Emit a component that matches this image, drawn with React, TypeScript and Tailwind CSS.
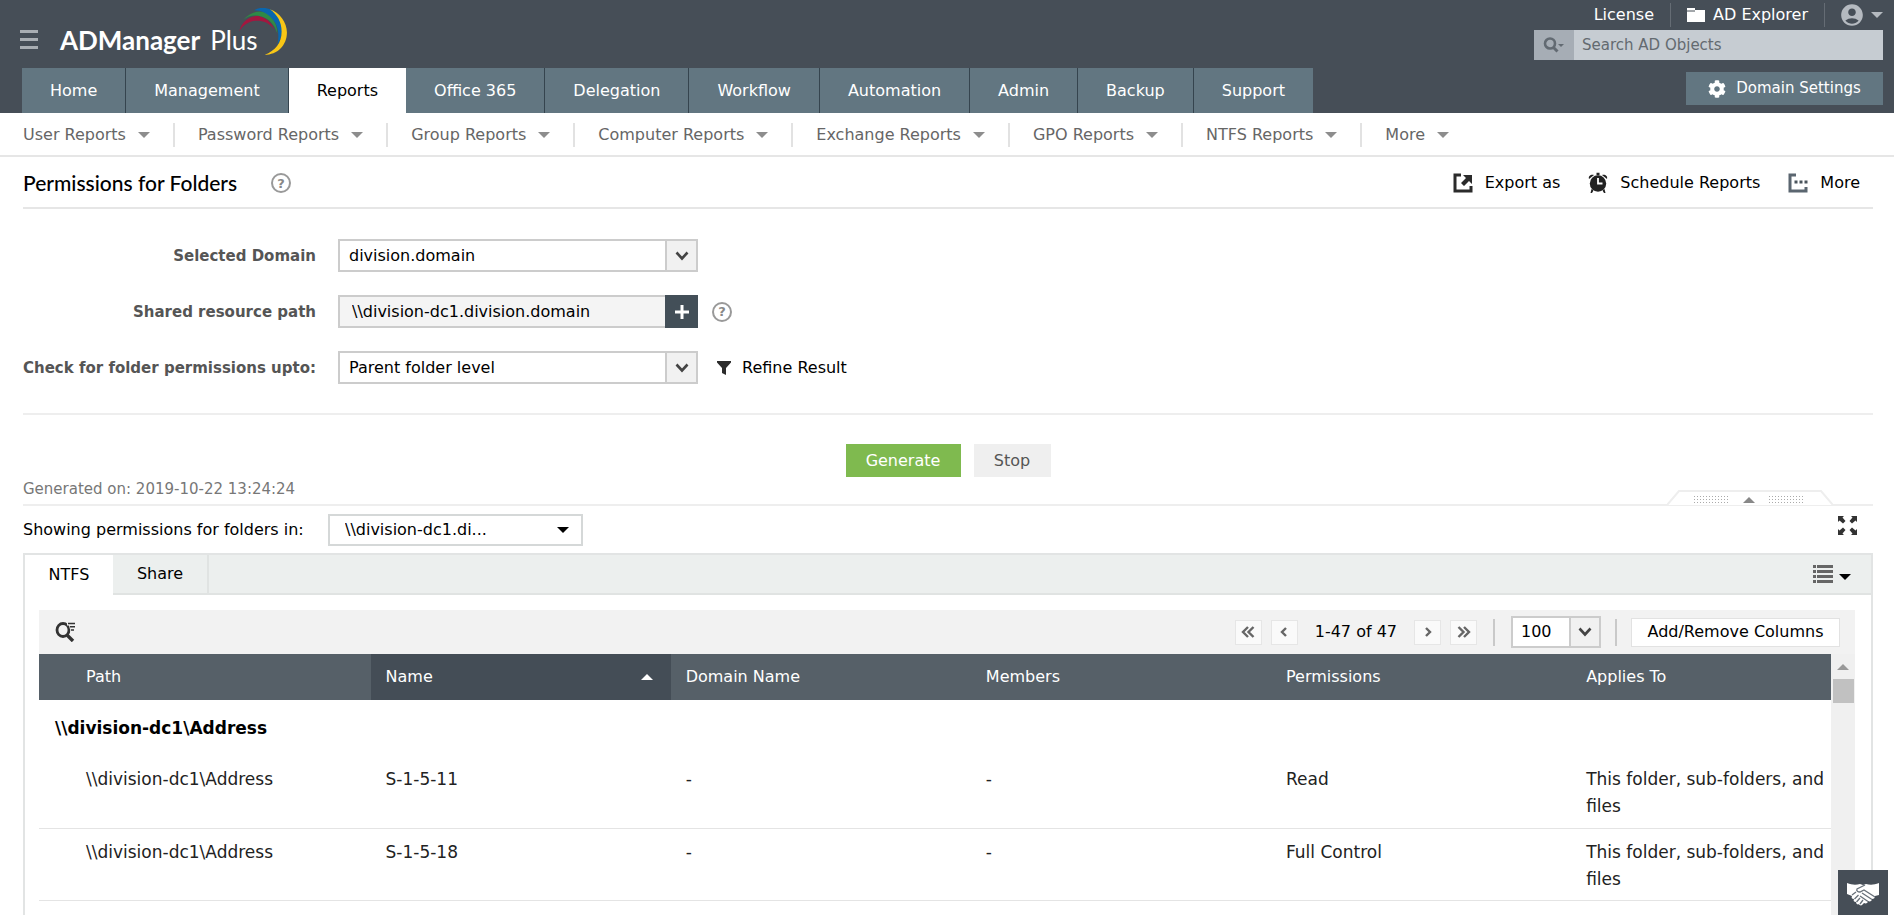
import { FaCog } from 'react-icons/fa';
import { MdAccountCircle } from 'react-icons/md';

const tabs = [
  'Home',
  'Management',
  'Reports',
  'Office 365',
  'Delegation',
  'Workflow',
  'Automation',
  'Admin',
  'Backup',
  'Support',
];

const reportMenus = [
  'User Reports',
  'Password Reports',
  'Group Reports',
  'Computer Reports',
  'Exchange Reports',
  'GPO Reports',
  'NTFS Reports',
  'More',
];

const columns = ['Path', 'Name', 'Domain Name', 'Members', 'Permissions', 'Applies To'];

const rows = [
  {
    path: '\\\\division-dc1\\Address',
    name: 'S-1-5-11',
    domain: '-',
    members: '-',
    permissions: 'Read',
    appliesTo: 'This folder, sub-folders, and files',
  },
  {
    path: '\\\\division-dc1\\Address',
    name: 'S-1-5-18',
    domain: '-',
    members: '-',
    permissions: 'Full Control',
    appliesTo: 'This folder, sub-folders, and files',
  },
];

function Caret({ className = '', up = false }: { className?: string; up?: boolean }) {
  return (
    <svg viewBox="0 0 12 6" className={`h-[6px] w-3 shrink-0 ${className}`} fill="currentColor" aria-hidden="true">
      <path d={up ? 'M0 6 6 0l6 6z' : 'M0 0h12L6 6z'} />
    </svg>
  );
}

function Chevron() {
  return (
    <svg viewBox="0 0 14 10" className="h-[10px] w-[14px]" fill="none" stroke="#444" strokeWidth="2.6" aria-hidden="true">
      <path d="M1.5 1.5 7 7.5l5.5-6" />
    </svg>
  );
}

function Logo() {
  return (
    <a href="#" className="relative flex items-baseline gap-[10px] pr-[30px] font-[Lato,sans-serif] text-[26px] leading-8 text-white">
      <span className="font-bold">ADManager</span>
      <span>Plus</span>
      <svg viewBox="1 1 47 45" className="absolute -top-4 right-0 h-12 w-[50px]" aria-hidden="true">
        <path d="M2 23C5 12 14 7 22 9c7 2 11 7 13 12-5-6-10-8-16-8-8 0-13 4-17 10z" fill="#a3173f" />
        <path d="M6 12C13 4 23 2 30 7c5 4 8 11 8 18-3-9-8-14-15-16-6-2-12-1-17 3z" fill="#2f8a46" />
        <path d="M16 3c9-5 19-1 24 7 4 8 3 17-2 26 2-10 1-19-5-25-4-5-10-8-17-8z" fill="#0a66ae" />
        <path d="M31 2c9 3 16 12 16 22 0 12-9 21-21 21 10-4 16-11 16-22C42 14 38 7 31 2z" fill="#f8c616" />
      </svg>
    </a>
  );
}

function ExportIcon() {
  return (
    <svg viewBox="0 0 20 20" className="size-5" aria-hidden="true">
      <path d="M8 2H2v16h16v-5" fill="none" stroke="#2b2b2b" strokeWidth="3" />
      <path d="M10 2h9v9l-3-3-5 5-3-3 5-5z" fill="#2b2b2b" />
    </svg>
  );
}

function AlarmIcon() {
  return (
    <svg viewBox="0 0 20 22" className="h-[22px] w-5" aria-hidden="true">
      <path d="M1 7c-1-3 2-5 5-4zM19 7c1-3-2-5-5-4zM8.500.8h3v2.500h-3zM3.500 17l2 1.500L4 21H2.500zM16.500 17l-2 1.500L16 21h1.500z" fill="#222" />
      <circle cx="10" cy="11.500" r="8.200" fill="#222" />
      <path d="M10 6v5.500h4.500" fill="none" stroke="#fff" strokeWidth="1.800" />
    </svg>
  );
}

function MoreIcon() {
  return (
    <svg viewBox="0 0 20 20" className="size-5" aria-hidden="true">
      <path d="M8 2H2v16h16v-4" fill="none" stroke="#5b6670" strokeWidth="3" />
      <path d="M6.500 7.500h3v3h-3zM11.500 7.500h3v3h-3zM16.500 7.500h3v3h-3z" fill="#4a545c" />
    </svg>
  );
}

function HandshakeIcon() {
  return (
    <svg viewBox="0 0 32 23" className="h-[23px] w-8" aria-hidden="true">
      <path d="M0 0c5 2 9 2 13 1l3 1 3-1c4 1 8 1 13-1v12l-4 1c0 2-1 3-3 3 0 2-2 3-4 2 0 2-2 3-4 2l-2 2c-1 1-3 0-3-1-1 1-3 0-3-2-2 0-3-1-2-3-2 0-3-1-2-3l-5-2z" fill="#fff" />
      <path
        d="M18 2 10 6c-1 2 1 3 3 3l4-2 11 7M15 10l10 6.500M13 13l8 5.500M5 12l4-3M7.500 16l4-4M9.500 19l3.500-4M13 21l3-4"
        fill="none"
        stroke="#68717a"
        strokeWidth="1.300"
      />
    </svg>
  );
}

function HelpButton() {
  return (
    <button
      type="button"
      aria-label="Help"
      className="flex size-5 items-center justify-center rounded-full border-2 border-[#999] text-[13px] leading-none font-bold text-[#888]"
    >
      ?
    </button>
  );
}

function HeaderBar() {
  return (
    <header className="bg-[#464e57] text-white">
      <div className="flex h-[68px] justify-between pr-[11px] pl-5">
        <div className="flex items-start gap-[22px] pt-6">
          <button type="button" aria-label="Menu" className="mt-[6px] flex w-[18px] flex-col gap-[5px]">
            <span className="h-[3px] w-full bg-[#a9aeb3]" />
            <span className="h-[3px] w-full bg-[#a9aeb3]" />
            <span className="h-[3px] w-full bg-[#a9aeb3]" />
          </button>
          <Logo />
        </div>
        <div className="flex w-[349px] flex-col">
          <div className="flex h-[30px] items-center justify-end">
            <a href="#" className="pr-4">
              License
            </a>
            <a href="#" className="flex h-6 items-center gap-2 border-l border-[#656c74] px-4">
              <svg viewBox="0 0 18 14" className="h-[14px] w-[18px]" fill="#fff" aria-hidden="true">
                <path d="M0 0h8v2h10v12H0z" />
                <path d="M0 3h8" stroke="#464e57" />
              </svg>
              AD Explorer
            </a>
            <button type="button" aria-label="Account" className="flex h-6 items-center gap-[6px] border-l border-[#656c74] pl-[14px] text-[#b5bac0]">
              <MdAccountCircle className="size-[26px]" />
              <Caret />
            </button>
          </div>
          <div className="flex h-[30px]">
            <button type="button" aria-label="Search type" className="flex w-10 items-center justify-center bg-[#a6adb5] text-[#626a72]">
              <svg viewBox="0 0 22 16" className="h-4 w-[22px]" fill="none" stroke="currentColor" aria-hidden="true">
                <circle cx="7" cy="6.500" r="5" strokeWidth="2.600" />
                <path d="m10.500 10.500 4 4" strokeWidth="3" />
                <path d="M15 7h6l-3 3z" fill="currentColor" stroke="none" />
              </svg>
            </button>
            <input
              type="text"
              aria-label="Search AD Objects"
              placeholder="Search AD Objects"
              className="min-w-0 flex-1 bg-[#c6ccd2] px-2 text-[15px] text-[#333] outline-none placeholder:text-[#636a70]"
            />
          </div>
        </div>
      </div>
      <div className="flex h-[45px] justify-between pr-[11px] pl-[22px]">
        <nav className="flex">
          {tabs.map((tab) => (
            <a
              key={tab}
              href="#"
              className={
                tab === 'Reports'
                  ? 'flex items-center bg-white px-7 text-black'
                  : 'flex items-center border-r border-[#35444e] bg-[#627681] px-7 last:border-r-0'
              }
            >
              {tab}
            </a>
          ))}
        </nav>
        <button type="button" className="mt-1 flex h-[33px] w-[197px] items-center justify-center gap-[10px] bg-[#627681] text-[15px]">
          <FaCog className="size-[18px]" />
          Domain Settings
        </button>
      </div>
    </header>
  );
}

function ReportMenu() {
  return (
    <nav className="flex h-11 items-center border-b-2 border-[#e6e6e6] pt-[2px] text-[#666]">
      {reportMenus.map((menu, i) => (
        <div key={menu} className="flex items-center">
          {i > 0 && <span className="h-6 w-[2px] bg-[#e2e2e2]" />}
          <button type="button" className="flex items-center gap-3 px-[23px]">
            {menu}
            <Caret className="text-[#8d8d8d]" />
          </button>
        </div>
      ))}
    </nav>
  );
}

function SelectBox({ id, value, options }: { id: string; value: string; options: string[] }) {
  return (
    <div className="relative w-[360px]">
      <select id={id} defaultValue={value} className="h-[33px] w-full appearance-none border-2 border-[#ccc] bg-white px-[9px] outline-none">
        {options.map((o) => (
          <option key={o}>{o}</option>
        ))}
      </select>
      <span className="pointer-events-none absolute inset-y-0 right-0 flex w-[33px] items-center justify-center border-2 border-[#ccc] bg-[#f1f1f1]">
        <Chevron />
      </span>
    </div>
  );
}

function FilterForm() {
  return (
    <form className="grid grid-cols-[293px_1fr] items-center gap-x-[22px] gap-y-[23px] border-b-2 border-[#eee] pt-[30px] pb-[29px]">
      <label htmlFor="domain" className="pt-[2px] text-right text-[15px] font-bold text-[#555]">
        Selected Domain
      </label>
      <SelectBox id="domain" value="division.domain" options={['division.domain']} />

      <label htmlFor="resource" className="pt-[2px] text-right text-[15px] font-bold text-[#555]">
        Shared resource path
      </label>
      <div className="flex items-center">
        <input
          id="resource"
          type="text"
          defaultValue="\\division-dc1.division.domain"
          className="h-[33px] w-[327px] border-2 border-r-0 border-[#ccc] bg-[#f4f4f4] px-3 outline-none"
        />
        <button type="button" aria-label="Add path" className="mr-[14px] flex h-[33px] w-[33px] items-center justify-center bg-[#434f58]">
          <svg viewBox="0 0 16 16" className="size-4" stroke="#fff" strokeWidth="3" aria-hidden="true">
            <path d="M8 1v14M1 8h14" />
          </svg>
        </button>
        <HelpButton />
      </div>

      <label htmlFor="level" className="pt-[2px] text-right text-[15px] font-bold whitespace-nowrap text-[#555]">
        Check for folder permissions upto:
      </label>
      <div className="flex items-center">
        <SelectBox id="level" value="Parent folder level" options={['Parent folder level']} />
        <button type="button" className="ml-[18px] flex items-center gap-[10px]">
          <svg viewBox="0 0 16 14" className="h-[14px] w-4" fill="#2b2b2b" aria-hidden="true">
            <path d="M1 0h14v1.500L10 7v7L6 12V7L1 1.500z" />
          </svg>
          Refine Result
        </button>
      </div>
    </form>
  );
}

function CollapseHandle() {
  return (
    <button type="button" aria-label="Collapse filters" className="absolute right-[40px] bottom-[-2px] h-4 w-[166px]">
      <svg viewBox="0 0 166 16" className="h-4 w-[166px]" aria-hidden="true">
        <path d="M0 15 12 1h142l12 14" fill="#fff" stroke="#eee" strokeWidth="2" />
        <path d="M76 13 82 7l6 6z" fill="#888" />
        <path d="M27 6.500h34M27 9.500h34M27 12.500h34M102 6.500h34M102 9.500h34M102 12.500h34" stroke="#aaa" strokeDasharray="1 2" />
      </svg>
    </button>
  );
}

function PageButton({ label, d }: { label: string; d: string }) {
  return (
    <button type="button" aria-label={label} className="flex h-[25px] w-[27px] items-center justify-center border border-[#e6e6e6] bg-[#fafafa]">
      <svg viewBox="0 0 14 12" className="h-3 w-[14px]" fill="none" stroke="#666" strokeWidth="2.400" aria-hidden="true">
        <path d={d} />
      </svg>
    </button>
  );
}

function GridToolbar() {
  return (
    <div className="flex h-11 items-center justify-between bg-[#f2f2f2] pr-[15px] pl-4">
      <button type="button" aria-label="Filter rows">
        <svg viewBox="0 0 22 20" className="h-5 w-[22px]" fill="none" stroke="#333" aria-hidden="true">
          <ellipse cx="8" cy="8" rx="6" ry="6.500" strokeWidth="2.800" />
          <path d="m11.500 12.500 6.500 6.500" strokeWidth="3.400" />
          <path d="M12 1.800h8M14.500 5h5.500M15.500 8.200h3.500" stroke="#f2f2f2" strokeWidth="3.200" />
          <path d="M13 1.500h7M15 4.700h5M16 7.900h3" strokeWidth="1.500" />
        </svg>
      </button>
      <div className="flex items-center">
        <div className="flex items-center gap-[9px]">
          <PageButton label="First page" d="M7 1 2 6l5 5M12.500 1l-5 5 5 5" />
          <PageButton label="Previous page" d="M9 2 5 6l4 4" />
          <span className="px-2">1-47 of 47</span>
          <PageButton label="Next page" d="M5 2l4 4-4 4" />
          <PageButton label="Last page" d="M1.500 1l5 5-5 5M7 1l5 5-5 5" />
        </div>
        <span className="mx-4 h-[27px] w-[2px] bg-[#c9c9c9]" />
        <div className="relative w-[90px]">
          <select aria-label="Rows per page" defaultValue="100" className="h-8 w-full appearance-none border-2 border-[#ccc] bg-white px-2 outline-none">
            <option>25</option>
            <option>50</option>
            <option>100</option>
          </select>
          <span className="pointer-events-none absolute inset-y-0 right-0 flex w-8 items-center justify-center border-2 border-[#ccc] bg-[#f1f1f1]">
            <Chevron />
          </span>
        </div>
        <span className="mx-[14px] h-[27px] w-[2px] bg-[#c9c9c9]" />
        <button type="button" className="h-[29px] w-[209px] border border-[#e2e2e2] bg-white whitespace-nowrap">
          Add/Remove Columns
        </button>
      </div>
    </div>
  );
}

function PermissionsTable() {
  return (
    <table className="w-full table-fixed border-collapse text-left">
      <colgroup>
        <col className="w-[18.5%]" />
        <col className="w-[16.75%]" />
        <col className="w-[16.75%]" />
        <col className="w-[16.75%]" />
        <col className="w-[16.75%]" />
        <col />
      </colgroup>
      <thead>
        <tr className="h-[46px] bg-[#566068] text-white">
          {columns.map((column, i) => (
            <th
              key={column}
              className={`pr-[18px] font-normal ${i === 0 ? 'pl-[47px]' : 'pl-[15px]'} ${column === 'Name' ? 'bg-[#444d56]' : ''}`}
            >
              <span className="flex items-center justify-between">
                {column}
                {column === 'Name' && <Caret up />}
              </span>
            </th>
          ))}
        </tr>
      </thead>
      <tbody className="text-[17px] text-[#222]">
        <tr className="h-14">
          <td colSpan={6} className="pt-[2px] pl-4 font-bold text-black">
            {'\\\\division-dc1\\Address'}
          </td>
        </tr>
        {rows.map((row) => (
          <tr key={row.name} className="h-[72px] border-b border-[#e4e4e4] align-top leading-[27px]">
            <td className="pt-[10px] pl-[47px]">{row.path}</td>
            <td className="pt-[10px] pl-[15px]">{row.name}</td>
            <td className="pt-[10px] pl-[15px]">{row.domain}</td>
            <td className="pt-[10px] pl-[15px]">{row.members}</td>
            <td className="pt-[10px] pl-[15px]">{row.permissions}</td>
            <td className="pt-[10px] pb-[7px] pl-[15px]">{row.appliesTo}</td>
          </tr>
        ))}
      </tbody>
    </table>
  );
}

export default function App() {
  return (
    <div className="flex h-screen flex-col overflow-hidden bg-white font-['DejaVu_Sans',Verdana,sans-serif] text-[16px] text-black">
      <HeaderBar />
      <ReportMenu />

      <main className="flex min-h-0 flex-1 flex-col pr-[21px] pl-[23px]">
        <div className="flex h-[52px] shrink-0 items-center justify-between border-b-2 border-[#e6e6e6] pt-[2px] pr-[13px]">
          <div className="flex items-center gap-[34px]">
            <h1 className="font-[Lato,sans-serif] text-[21px] font-medium">Permissions for Folders</h1>
            <HelpButton />
          </div>
          <div className="flex items-center gap-7">
            <button type="button" className="flex items-center gap-3">
              <ExportIcon />
              Export as
            </button>
            <button type="button" className="flex items-center gap-3">
              <AlarmIcon />
              Schedule Reports
            </button>
            <button type="button" className="flex items-center gap-3">
              <MoreIcon />
              More
            </button>
          </div>
        </div>

        <FilterForm />

        <div className="relative h-[91px] shrink-0 border-b-2 border-[#eee] pt-[29px]">
          <div className="flex justify-center gap-[13px]">
            <button type="button" className="h-[33px] w-[115px] bg-[#7fba4f] text-white">
              Generate
            </button>
            <button type="button" className="h-[33px] w-[77px] bg-[#efefef] text-[#555]">
              Stop
            </button>
          </div>
          <p className="text-[15px] leading-6 text-[#777]">Generated on: 2019-10-22 13:24:24</p>
          <CollapseHandle />
        </div>

        <div className="flex h-[47px] shrink-0 items-center justify-between pr-4">
          <div className="flex items-center gap-3">
            <label htmlFor="folders" className="w-[293px]">
              Showing permissions for folders in:
            </label>
            <div className="relative w-[255px]">
              <select id="folders" className="h-8 w-full appearance-none border-2 border-[#d5d8d8] bg-white px-[15px] outline-none">
                <option>{'\\\\division-dc1.di...'}</option>
              </select>
              <Caret className="pointer-events-none absolute top-[13px] right-[14px]" />
            </div>
          </div>
          <button type="button" aria-label="Full screen" className="mt-[10px] self-start">
            <svg viewBox="0 0 19 19" className="size-[19px]" fill="#333" aria-hidden="true">
              <path d="M0 0h6L4.500 1.500 7.500 5 5 7.500 1.500 4.500 0 6zM19 0v6l-1.500-1.500L14 7.500 11.500 5l3-3.500L13 0zM0 19v-6l1.500 1.500L5 11.500 7.500 14l-3 3.500L6 19zM19 19h-6l1.500-1.500-3-3.500 2.500-2.500 3.500 3L19 13z" />
            </svg>
          </button>
        </div>

        <section className="flex min-h-0 flex-1 flex-col border-x-2 border-t-2 border-[#e2e4e4]">
          <div className="flex h-10 shrink-0 items-stretch justify-between bg-[#ecefee]">
            <div className="flex" role="tablist">
              <button type="button" role="tab" aria-selected="true" className="w-[88px] bg-white">
                NTFS
              </button>
              <button type="button" role="tab" aria-selected="false" className="w-24 border-r-2 border-b-2 border-[#e0e3e2]">
                Share
              </button>
            </div>
            <div className="flex flex-1 items-center justify-end border-b-2 border-[#e0e3e2] pr-5">
              <button type="button" aria-label="View options" className="flex items-center gap-[6px]">
                <svg viewBox="0 0 20 18" className="h-[18px] w-5" fill="#666" aria-hidden="true">
                  <path d="M0 0h3v3H0zM4 0h16v3H4zM0 5h3v3H0zM4 5h16v3H4zM0 10h3v3H0zM4 10h16v3H4zM0 15h3v3H0zM4 15h16v3H4z" />
                </svg>
                <Caret className="mt-[6px]" />
              </button>
            </div>
          </div>

          <div className="min-h-0 flex-1 overflow-hidden pt-[15px] pr-4 pl-[14px]">
            <GridToolbar />
            <div className="flex h-full">
              <div className="min-w-0 flex-1">
                <PermissionsTable />
              </div>
              <div className="flex w-6 flex-col items-center gap-[9px] bg-[#f0f0f0] pt-[10px]" aria-hidden="true">
                <Caret up className="text-[#999]" />
                <span className="h-6 w-[21px] bg-[#c1c1c1]" />
              </div>
            </div>
          </div>
        </section>
      </main>

      <button type="button" aria-label="Support" className="fixed right-[6px] bottom-0 flex h-[45px] w-[50px] items-center justify-center bg-[#464e57] pt-1">
        <HandshakeIcon />
      </button>
    </div>
  );
}
